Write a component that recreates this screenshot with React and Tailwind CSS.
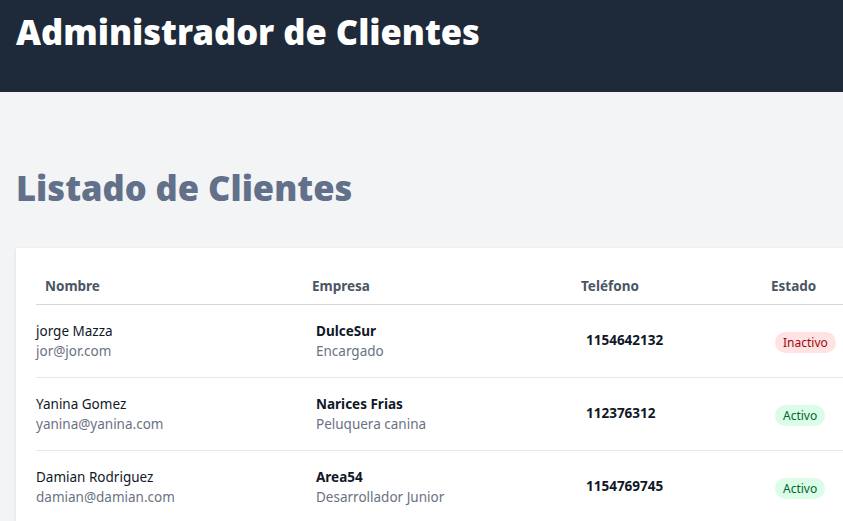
const clients = [
  { name: "jorge Mazza", email: "jor@jor.com", company: "DulceSur", role: "Encargado", phone: "1154642132", active: false },
  { name: "Yanina Gomez", email: "yanina@yanina.com", company: "Narices Frias", role: "Peluquera canina", phone: "112376312", active: true },
  { name: "Damian Rodriguez", email: "damian@damian.com", company: "Area54", role: "Desarrollador Junior", phone: "1154769745", active: true },
];

export default function App() {
  return (
    <div className="min-h-screen w-full overflow-hidden bg-gray-100 font-['Noto_Sans',sans-serif]">
      <header className="h-[92px] bg-gray-800 px-4 pt-3">
        <h1 className="text-[34.5px] leading-10 font-black text-white">Administrador de Clientes</h1>
      </header>

      <main className="px-4">
        <h2 className="mt-[76px] text-[34.5px] leading-10 font-black text-[#627089]">Listado de Clientes</h2>

        <div className="mt-10 w-[900px] bg-white px-5 pt-5 shadow-sm">
          <table className="w-full table-fixed">
            <colgroup>
              <col className="w-[271px]" />
              <col className="w-[270px]" />
              <col className="w-[190px]" />
              <col />
            </colgroup>
            <thead>
              <tr className="border-b border-gray-300">
                <th className="h-9 pl-[9px] text-left text-[13.5px] font-bold text-gray-600">Nombre</th>
                <th className="h-9 pl-[5px] text-left text-[13.5px] font-bold text-gray-600">Empresa</th>
                <th className="h-9 pl-1 text-left text-[13.5px] font-bold text-gray-600">Teléfono</th>
                <th className="h-9 pl-1 text-left text-[13.5px] font-bold text-gray-600">Estado</th>
              </tr>
            </thead>
            <tbody>
              {clients.map((client, key) => (
                <tr key={key} className="border-b border-gray-200">
                  <td className="py-4 text-[13.5px] leading-5">
                    <p className="text-gray-900">{client.name}</p>
                    <p className="text-gray-500">{client.email}</p>
                  </td>
                  <td className="py-4 pl-[9px] text-[13.5px] leading-5">
                    <p className="font-bold text-gray-900">{client.company}</p>
                    <p className="text-gray-500">{client.role}</p>
                  </td>
                  <td className="py-4 pl-[9px] text-[13.5px] font-bold text-gray-900">{client.phone}</td>
                  <td className="py-4 pl-2">
                    {client.active ? (
                      <span className="rounded-full bg-green-100 px-2 py-0.5 text-xs text-green-800">Activo</span>
                    ) : (
                      <span className="rounded-full bg-red-100 px-2 py-0.5 text-xs text-red-800">Inactivo</span>
                    )}
                  </td>
                </tr>
              ))}
            </tbody>
          </table>
        </div>
      </main>
    </div>
  );
}
